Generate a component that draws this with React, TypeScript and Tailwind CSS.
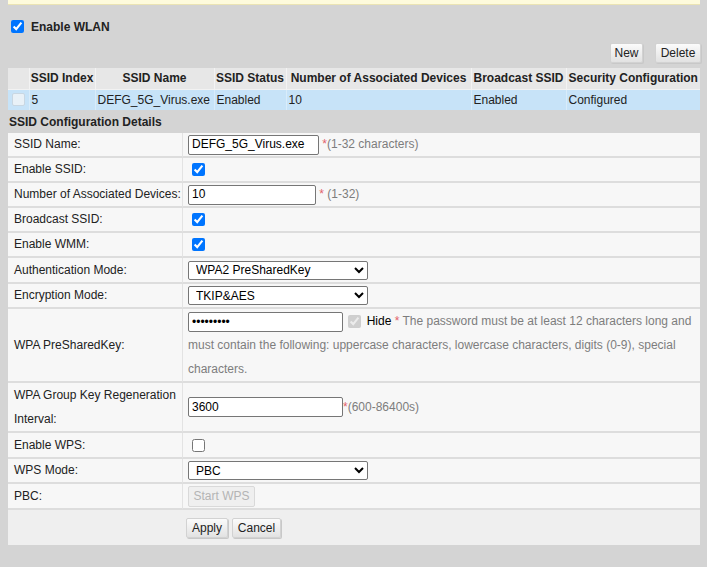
import React from "react";

const lbl =
  "w-[175px] pl-[6px] pr-[4px] py-0 border-r border-b-2 border-r-[#e3e3e3] border-b-[#dddddd] align-middle text-left font-normal leading-[23px]";
const val = "pl-[5px] pr-[2px] py-0 border-b-2 border-b-[#dddddd] align-middle leading-[23px]";
const txtInput =
  "h-[20px] border border-[#767676] rounded-[2px] bg-white px-[3px] text-[12px] text-black align-middle outline-none";
const sel =
  "w-[180px] h-[19px] border border-[#767676] rounded-[2px] bg-white pl-[3px] text-[12px] text-black align-middle";
const star = "text-[#e2626b]";
const hint = "text-[#7d7d7d]";
const cb = "w-[13px] h-[13px] ml-[4px] align-middle";

function Btn({ children, w }: { children: React.ReactNode; w: string }) {
  return (
    <button
      className={`${w} h-[20px] text-[12px] text-[#222] bg-linear-to-b from-[#fbfbfb] to-[#e2e2e2] border border-[#d2d2d2] rounded-[2px] shadow-[1px_1px_0_#c8c8c8] leading-none`}
    >
      {children}
    </button>
  );
}

function Row({ h, label, children, labelClass = "" }: { h?: string; label: React.ReactNode; children: React.ReactNode; labelClass?: string }) {
  return (
    <tr>
      <td className={`${lbl} ${h ?? ""} ${labelClass}`}>{label}</td>
      <td className={`${val} ${h ?? ""}`}>{children}</td>
    </tr>
  );
}

export default function App() {
  return (
    <div className="min-h-[567px] w-[707px] bg-[#d4d4d4] font-['Liberation_Sans',Arial,sans-serif] text-[12px] text-[#222] overflow-hidden">
      <div className="ml-2 w-[692px] h-[5px] bg-[#fefbdc] border-b border-[#ebe4b4]" />

      <div className="mt-[14px] h-[15px] flex items-center pl-[11px]">
        <input type="checkbox" defaultChecked className="w-[13px] h-[13px]" />
        <span className="ml-[7px] font-bold text-[12px]">Enable WLAN</span>
      </div>

      <div className="mt-[9px] ml-2 w-[693px] flex justify-end gap-[12px]">
        <Btn w="w-[33px]">New</Btn>
        <Btn w="w-[46px]">Delete</Btn>
      </div>

      <table className="mt-[5px] ml-2 w-[692px] table-fixed border-collapse">
        <colgroup>
          <col className="w-[21px]" />
          <col className="w-[66px]" />
          <col className="w-[119px]" />
          <col className="w-[72px]" />
          <col className="w-[185px]" />
          <col className="w-[95px]" />
          <col className="w-[134px]" />
        </colgroup>
        <thead>
          <tr className="h-[21px] bg-[#e7e7e7] border-b border-[#f2f2f2]">
            <th className="p-0 border-r border-[#f3f3f3]" />
            <th className="p-0 border-r border-[#f3f3f3] text-center font-bold whitespace-nowrap">SSID Index</th>
            <th className="p-0 border-r border-[#f3f3f3] text-center font-bold whitespace-nowrap">SSID Name</th>
            <th className="p-0 border-r border-[#f3f3f3] text-center font-bold whitespace-nowrap">SSID Status</th>
            <th className="p-0 border-r border-[#f3f3f3] text-center font-bold whitespace-nowrap">
              Number of Associated Devices
            </th>
            <th className="p-0 border-r border-[#f3f3f3] text-center font-bold whitespace-nowrap">Broadcast SSID</th>
            <th className="p-0 text-center font-bold whitespace-nowrap">Security Configuration</th>
          </tr>
        </thead>
        <tbody>
          <tr className="h-[21px] bg-[#c7e3f8]">
            <td className="py-0 border-r border-[#d9ecfa] pl-[4px] align-middle">
              <span className="block w-[13px] h-[13px] rounded-[2px] border border-[#c9d7e2] bg-[#e9f1f7]" />
            </td>
            <td className="py-0 border-r border-[#d9ecfa] pl-[2px]">5</td>
            <td className="py-0 border-r border-[#d9ecfa] pl-[2px] whitespace-nowrap">DEFG_5G_Virus.exe</td>
            <td className="py-0 border-r border-[#d9ecfa] pl-[2px]">Enabled</td>
            <td className="py-0 border-r border-[#d9ecfa] pl-[2px]">10</td>
            <td className="py-0 border-r border-[#d9ecfa] pl-[2px]">Enabled</td>
            <td className="py-0 pl-[2px]">Configured</td>
          </tr>
        </tbody>
      </table>

      <div className="h-[23px] ml-[9px] flex items-center font-bold">SSID Configuration Details</div>

      <table className="ml-2 w-[692px] table-fixed border-separate border-spacing-0 bg-[#f7f7f7]">
        <colgroup>
          <col className="w-[175px]" />
          <col />
        </colgroup>
        <tbody>
          <Row h="h-[25px]" label="SSID Name:">
            <input type="text" defaultValue="DEFG_5G_Virus.exe" className={`${txtInput} w-[131px]`} />{" "}
            <span className={star}>*</span>
            <span className={hint}>(1-32 characters)</span>
          </Row>
          <Row h="h-[25px]" label="Enable SSID:">
            <input type="checkbox" defaultChecked className={cb} />
          </Row>
          <Row h="h-[25px]" label="Number of Associated Devices:" labelClass="whitespace-nowrap">
            <input type="text" defaultValue="10" className={`${txtInput} w-[128px]`} />{" "}
            <span className={star}>*</span>
            <span className={hint}> (1-32)</span>
          </Row>
          <Row h="h-[25px]" label="Broadcast SSID:">
            <input type="checkbox" defaultChecked className={cb} />
          </Row>
          <Row h="h-[25px]" label="Enable WMM:">
            <input type="checkbox" defaultChecked className={cb} />
          </Row>
          <Row h="h-[26px]" label="Authentication Mode:">
            <select className={sel} defaultValue="WPA2 PreSharedKey">
              <option>WPA2 PreSharedKey</option>
            </select>
          </Row>
          <Row h="h-[25px]" label="Encryption Mode:">
            <select className={sel} defaultValue="TKIP&AES">
              <option>TKIP&amp;AES</option>
            </select>
          </Row>
          <tr>
            <td className={lbl}>WPA PreSharedKey:</td>
            <td className={`${val} ${hint} !leading-[24px]`}>
              <input type="password" defaultValue="123456789" className={`${txtInput} w-[155px]`} />{" "}
              <input
                type="checkbox"
                defaultChecked
                disabled
                className="w-[13px] h-[13px] ml-[2px] mr-[2px] align-middle"
              />{" "}
              <span className="text-black">Hide</span> <span className={star}>*</span> The password must be at
              least 12 characters long and must contain the following: uppercase characters, lowercase
              characters, digits (0-9), special characters.
            </td>
          </tr>
          <tr>
            <td className={`${lbl} !leading-[24px]`}>WPA Group Key Regeneration Interval:</td>
            <td className={val}>
              <input type="text" defaultValue="3600" className={`${txtInput} w-[155px]`} />
              <span className={star}>*</span>
              <span className={hint}>(600-86400s)</span>
            </td>
          </tr>
          <Row h="h-[26px]" label="Enable WPS:">
            <input type="checkbox" className={cb} />
          </Row>
          <Row h="h-[25px]" label="WPS Mode:">
            <select className={sel} defaultValue="PBC">
              <option>PBC</option>
            </select>
          </Row>
          <Row h="h-[26px]" label="PBC:">
            <button
              disabled
              className="w-[67px] h-[21px] align-middle text-[12px] text-[#b4b4b4] bg-[#efefef] border border-[#d9d9d9] rounded-[2px] leading-none"
            >
              Start WPS
            </button>
          </Row>
          <tr className="bg-[#efefef]">
            <td className="h-[35px] p-0" />
            <td className="pl-[3px] py-0 align-middle">
              <div className="flex gap-[4px]">
                <Btn w="w-[42px]">Apply</Btn>
                <Btn w="w-[49px]">Cancel</Btn>
              </div>
            </td>
          </tr>
        </tbody>
      </table>
    </div>
  );
}
